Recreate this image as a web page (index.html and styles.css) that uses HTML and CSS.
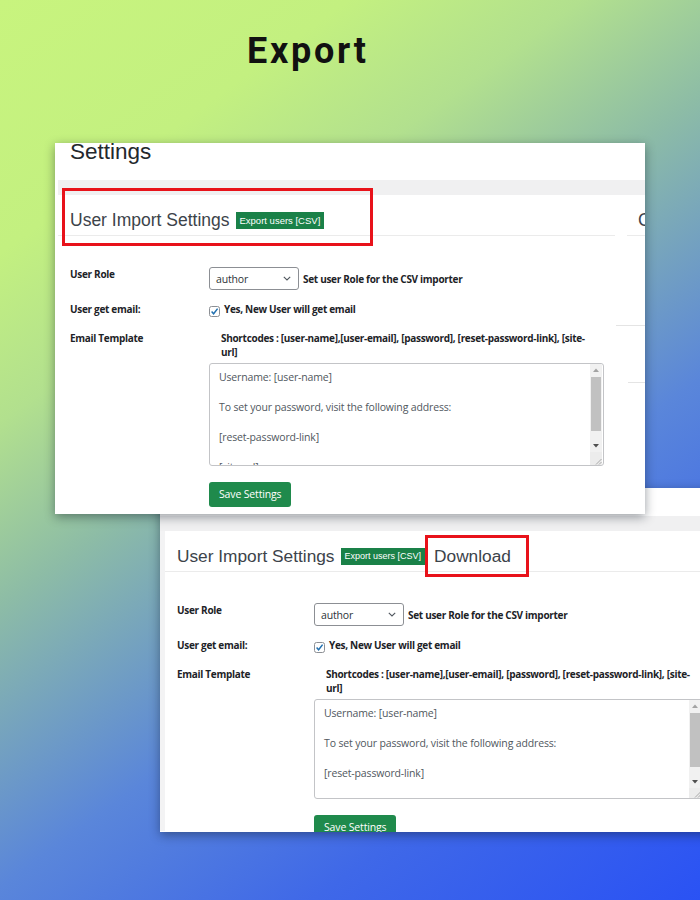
FILE: index.html
```html
<!DOCTYPE html>
<html lang="en">
<head>
<meta charset="utf-8">
<title>Export</title>
<link rel="stylesheet" href="styles.css">
</head>
<body>
<main class="stage">
  <h1 class="title">Export</h1>

  <section class="shot shot-one">
    <h2 class="page-title">Settings</h2>
    <div class="band"></div>
    <div class="wrap">
      <div class="panel">
        <div class="panel-head">
          <span class="panel-title">User Import Settings</span>
          <span class="badge">Export users [CSV]</span>
        </div>
        <div class="form">
          <div class="row row-role">
            <div class="label">User Role</div>
            <div class="field field-center">
              <div class="select"><span>author</span><svg class="chev" width="8" height="5" viewBox="0 0 8 5"><path d="M0.8 0.8 L4 4 L7.2 0.8" fill="none" stroke="#50575e" stroke-width="1.1"/></svg></div>
              <span class="note">Set user Role for the CSV importer</span>
            </div>
          </div>
          <div class="row row-mail">
            <div class="label">User get email:</div>
            <div class="field">
              <svg class="check" width="11" height="11" viewBox="0 0 11 11"><rect x="0.5" y="0.5" width="10" height="10" rx="2" fill="#fff" stroke="#8c8f94"/><path d="M2.6 5.6 L4.6 7.8 L8.6 2.6" fill="none" stroke="#2271b1" stroke-width="1.5"/></svg>
              <span class="note">Yes, New User will get email</span>
            </div>
          </div>
          <div class="row row-tpl">
            <div class="label">Email Template</div>
            <div class="field-col">
              <p class="codes">Shortcodes : [user-name],[user-email], [password], [reset-password-link], [site-url]</p>
              <div class="ta">
                <div class="ta-text">Username: [user-name]

To set your password, visit the following address:

[reset-password-link]

[site-url]</div>
                <div class="sb">
                  <div class="sb-btn"><svg width="6" height="4" viewBox="0 0 6 4"><path d="M0 4 L3 0.5 L6 4 Z" fill="#a3a3a3"/></svg></div>
                  <div class="sb-thumb"></div>
                  <div class="sb-track"></div>
                  <div class="sb-btn"><svg width="6" height="4" viewBox="0 0 6 4"><path d="M0 0 L3 3.5 L6 0 Z" fill="#505050"/></svg></div>
                  <div class="sb-corner"><svg width="8" height="8" viewBox="0 0 8 8"><path d="M7.5 2 L2 7.5 M7.5 5 L5 7.5" stroke="#9a9a9a" stroke-width="0.8"/></svg></div>
                </div>
              </div>
              <div class="btn">Save Settings</div>
            </div>
          </div>
        </div>
      </div>
      <aside class="side">
        <div class="side-head">CSV Format</div>
        <div class="side-line side-line-a"></div>
        <div class="side-line side-line-b"></div>
      </aside>
    </div>
    <span class="mark mark-one"></span>
  </section>

  <section class="shot shot-two">
    <div class="top-space"></div>
    <div class="band"></div>
    <div class="wrap">
      <div class="panel">
        <div class="panel-head">
          <span class="panel-title">User Import Settings</span>
          <span class="badge">Export users [CSV]</span>
          <span class="panel-title download">Download</span>
        </div>
        <div class="form">
          <div class="row row-role">
            <div class="label">User Role</div>
            <div class="field field-center">
              <div class="select"><span>author</span><svg class="chev" width="8" height="5" viewBox="0 0 8 5"><path d="M0.8 0.8 L4 4 L7.2 0.8" fill="none" stroke="#50575e" stroke-width="1.1"/></svg></div>
              <span class="note">Set user Role for the CSV importer</span>
            </div>
          </div>
          <div class="row row-mail">
            <div class="label">User get email:</div>
            <div class="field">
              <svg class="check" width="11" height="11" viewBox="0 0 11 11"><rect x="0.5" y="0.5" width="10" height="10" rx="2" fill="#fff" stroke="#8c8f94"/><path d="M2.6 5.6 L4.6 7.8 L8.6 2.6" fill="none" stroke="#2271b1" stroke-width="1.5"/></svg>
              <span class="note">Yes, New User will get email</span>
            </div>
          </div>
          <div class="row row-tpl">
            <div class="label">Email Template</div>
            <div class="field-col">
              <p class="codes">Shortcodes : [user-name],[user-email], [password], [reset-password-link], [site-url]</p>
              <div class="ta">
                <div class="ta-text">Username: [user-name]

To set your password, visit the following address:

[reset-password-link]

[site-url]</div>
                <div class="sb">
                  <div class="sb-btn"><svg width="6" height="4" viewBox="0 0 6 4"><path d="M0 4 L3 0.5 L6 4 Z" fill="#a3a3a3"/></svg></div>
                  <div class="sb-thumb"></div>
                  <div class="sb-track"></div>
                  <div class="sb-btn"><svg width="6" height="4" viewBox="0 0 6 4"><path d="M0 0 L3 3.5 L6 0 Z" fill="#505050"/></svg></div>
                  <div class="sb-corner"><svg width="8" height="8" viewBox="0 0 8 8"><path d="M7.5 2 L2 7.5 M7.5 5 L5 7.5" stroke="#9a9a9a" stroke-width="0.8"/></svg></div>
                </div>
              </div>
              <div class="btn">Save Settings</div>
            </div>
          </div>
        </div>
      </div>
    </div>
    <span class="mark mark-two"></span>
  </section>
</main>
</body>
</html>
```

FILE: styles.css
```css
* { box-sizing: border-box; }

html, body {
  margin: 0;
  padding: 0;
}

body {
  width: 700px;
  height: 900px;
  overflow: hidden;
  font-family: "Open Sans", "Noto Sans", sans-serif;
  background: linear-gradient(144deg, #c8f47e 0%, #c3f080 18%, #b2e08e 30%, #8dbca6 43%, #5a86da 63%, #3f68e8 80%, #2a52f4 100%);
}

.stage {
  position: relative;
  width: 700px;
  height: 900px;
}

.title {
  margin: 0;
  padding: 29px 0 0 247px;
  font: 700 36px/44px Roboto, "Liberation Sans", sans-serif;
  letter-spacing: 2.7px;
  color: #111;
}

/* screenshot windows */
.shot {
  position: absolute;
  background: #fff;
  overflow: hidden;
  box-shadow: 0 3px 10px rgba(10, 20, 30, 0.42);
}

.shot-one {
  left: 55px;
  top: 143px;
  width: 590px;
  height: 371px;
  z-index: 2;
  --label-w: 139px;
  --ta-w: 395px;
  --ta-h: 103px;
  --h-size: 17.5px;
  --b-size: 9.5px;
}

.shot-two {
  left: 160px;
  top: 488px;
  width: 580px;
  height: 344px;
  z-index: 1;
  --label-w: 137px;
  --ta-w: 389px;
  --ta-h: 100px;
  --h-size: 17.3px;
  --b-size: 9px;
}

.page-title {
  margin: 0 0 19px;
  padding-left: 15px;
  font: 400 22.5px/18px "Liberation Sans", Arial, sans-serif;
  color: #23282d;
}

.top-space { height: 28px; }

.band {
  height: 15px;
  background: #f0f0f1;
}

.shot-one .band { margin-left: 3px; }

.wrap {
  display: flex;
  gap: 1px;
}

.shot-one .wrap { padding-left: 3px; }
.shot-two .wrap {
  border-left: 5px solid #f3f3f4;
  height: 300px;
}

.panel { flex: 0 0 557px; }
.shot-two .panel { flex: 1; }

.panel-head {
  display: flex;
  align-items: center;
  gap: 6px;
  height: 41px;
  padding: 15px 0 5px 12px;
  border-bottom: 1px solid #ebebeb;
  white-space: nowrap;
}

.panel-title {
  font: 400 var(--h-size)/20px "Liberation Sans", Arial, sans-serif;
  color: #3c434a;
}

.download { margin-left: 3px; }

.badge {
  flex: none;
  height: 17px;
  padding: 0 4px;
  background: #1a8148;
  color: #fff;
  font: 400 var(--b-size)/17px "Liberation Sans", Arial, sans-serif;
}

/* form */
.form { padding: 31px 0 0 12px; }

.row {
  display: grid;
  grid-template-columns: var(--label-w) 1fr;
}

.row-mail { margin-top: 12px; }
.row-tpl { margin-top: 14px; }

.label {
  font-size: 10px;
  font-weight: 700;
  line-height: 14px;
  letter-spacing: -0.3px;
  color: #1d2327;
}

.field {
  display: flex;
  align-items: flex-start;
  gap: 4px;
}

.field-center { align-items: center; }

.note {
  font-size: 10px;
  font-weight: 700;
  line-height: 14px;
  letter-spacing: -0.3px;
  color: #1d2327;
  white-space: nowrap;
}

.select {
  display: flex;
  align-items: center;
  justify-content: space-between;
  width: 90px;
  height: 23px;
  padding: 0 7px 0 6px;
  border: 1px solid #8c8f94;
  border-radius: 3px;
  font-size: 10.5px;
  letter-spacing: -0.15px;
  color: #2c3338;
}

.check { margin-top: 4px; flex: none; }

.field-col {
  display: flex;
  flex-direction: column;
  align-items: flex-start;
}

.codes {
  margin: 0;
  width: 383px;
  padding-left: 12px;
  font-size: 10px;
  font-weight: 700;
  line-height: 14px;
  letter-spacing: -0.3px;
  color: #1d2327;
}

.ta {
  display: flex;
  margin-top: 4px;
  width: var(--ta-w);
  height: var(--ta-h);
  border: 1px solid #c3c4c7;
  border-radius: 3px;
  overflow: hidden;
  background: #fff;
}

.ta-text {
  flex: 1;
  padding: 6px 9px;
  font-size: 10.5px;
  line-height: 15px;
  letter-spacing: -0.15px;
  color: #50575e;
  white-space: pre-line;
  overflow: hidden;
}

.sb {
  flex: 0 0 12px;
  display: flex;
  flex-direction: column;
  margin-right: 1px;
  background: #f1f1f1;
}

.sb-btn {
  height: 12px;
  display: flex;
  align-items: center;
  justify-content: center;
}

.sb-thumb {
  height: 54px;
  margin: 1px 1px 0;
  background: #c1c1c1;
}

.sb-track { height: 9px; }

.sb-corner {
  flex: 1;
  display: flex;
  align-items: flex-end;
  justify-content: flex-end;
  background: #ececec;
}

.btn {
  margin-top: 16px;
  height: 25px;
  padding: 0 10px;
  border-radius: 3px;
  background: #1f8a4c;
  color: #fff;
  font-size: 10.5px;
  line-height: 25px;
  letter-spacing: -0.15px;
  white-space: nowrap;
}

/* right sidebar of the first window */
.side {
  flex: 0 0 29px;
  overflow: hidden;
}

.side-head {
  margin-left: 11px;
  height: 41px;
  padding: 15px 0 0 11px;
  border-bottom: 1px solid #ebebeb;
  font: 400 17.5px/20px "Liberation Sans", Arial, sans-serif;
  color: #3c434a;
  white-space: nowrap;
}

.side-line { border-top: 1px solid #e4e4e4; }
.side-line-a { margin-top: 89px; }
.side-line-b { margin-top: 56px; margin-left: 12px; }

/* red annotation boxes */
.mark {
  position: absolute;
  border: 3px solid #e8121a;
}

.mark-one {
  left: 7px;
  top: 45px;
  width: 311px;
  height: 58px;
}

.mark-two {
  left: 265px;
  top: 47px;
  width: 104px;
  height: 42px;
}
```
